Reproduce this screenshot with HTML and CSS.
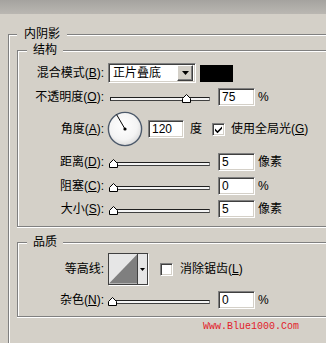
FILE: index.html
```html
<!DOCTYPE html>
<html lang="zh">
<head>
<meta charset="utf-8">
<link rel="stylesheet" href="styles.css">
</head>
<body>
<div class="titlebar"></div>
<fieldset class="group outer">
  <legend>内阴影</legend>
  <fieldset class="group sub struct">
    <legend>结构</legend>
    <div class="row">
      <span class="lbl">混合模式(<u>B</u>):</span>
      <div class="select">
        <span class="sel-text">正片叠底</span>
        <span class="sel-btn"><svg width="7" height="4" viewBox="0 0 7 4"><path d="M0 0H7L3.5 4Z" fill="#000"/></svg></span>
      </div>
      <div class="swatch"></div>
    </div>
    <div class="row">
      <span class="lbl">不透明度(<u>O</u>):</span>
      <div class="slider"><div class="track"></div><svg class="thumb" style="left:72px" width="9" height="9" viewBox="0 0 9 9"><path d="M4.5 0.5L8.5 4.5V8.5H0.5V4.5Z" fill="#fff" stroke="#000"/></svg></div>
      <div class="field">75</div>
      <span class="unit">%</span>
    </div>
    <div class="row">
      <span class="lbl">角度(<u>A</u>):</span>
      <svg class="dial" width="36" height="36" viewBox="0 0 36 36">
        <defs><radialGradient id="dg" cx="0.45" cy="0.4" r="0.6"><stop offset="0" stop-color="#ffffff"/><stop offset="0.7" stop-color="#f4f4f4"/><stop offset="1" stop-color="#dcdcdc"/></radialGradient></defs>
        <circle cx="18" cy="18" r="16.6" fill="url(#dg)" stroke="#4d5a6b" stroke-width="1.4"/>
        <line x1="18" y1="18" x2="9.6" y2="3.6" stroke="#000" stroke-width="1"/>
        <circle cx="18" cy="18" r="1.6" fill="#000"/>
      </svg>
      <div class="field f-angle">120</div>
      <span class="unit u-deg">度</span>
      <span class="check"><svg width="9" height="9" viewBox="0 0 9 9"><path d="M1 3.5L3.5 6L8 1.5V3.8L3.5 8.3L1 5.8Z" fill="#000"/></svg></span>
      <span class="ck-text">使用全局光(<u>G</u>)</span>
    </div>
    <div class="row gap6">
      <span class="lbl">距离(<u>D</u>):</span>
      <div class="slider"><div class="track"></div><svg class="thumb" style="left:-1px" width="9" height="9" viewBox="0 0 9 9"><path d="M4.5 0.5L8.5 4.5V8.5H0.5V4.5Z" fill="#fff" stroke="#000"/></svg></div>
      <div class="field">5</div>
      <span class="unit">像素</span>
    </div>
    <div class="row gap6">
      <span class="lbl">阻塞(<u>C</u>):</span>
      <div class="slider"><div class="track"></div><svg class="thumb" style="left:-1px" width="9" height="9" viewBox="0 0 9 9"><path d="M4.5 0.5L8.5 4.5V8.5H0.5V4.5Z" fill="#fff" stroke="#000"/></svg></div>
      <div class="field">0</div>
      <span class="unit">%</span>
    </div>
    <div class="row">
      <span class="lbl">大小(<u>S</u>):</span>
      <div class="slider"><div class="track"></div><svg class="thumb" style="left:-1px" width="9" height="9" viewBox="0 0 9 9"><path d="M4.5 0.5L8.5 4.5V8.5H0.5V4.5Z" fill="#fff" stroke="#000"/></svg></div>
      <div class="field">5</div>
      <span class="unit">像素</span>
    </div>
  </fieldset>
  <fieldset class="group sub quality">
    <legend>品质</legend>
    <div class="row">
      <span class="lbl">等高线:</span>
      <div class="contour">
        <svg class="preview" width="29" height="30" viewBox="0 0 29 30"><rect width="29" height="30" fill="#e6e6e6"/><path d="M0 30L29 0V30Z" fill="#7f7f7f"/></svg>
        <span class="ct-btn"><svg width="5" height="3" viewBox="0 0 5 3"><path d="M0 0H5L2.5 3Z" fill="#000"/></svg></span>
      </div>
      <span class="check check-aa"></span>
      <span class="ck-text aa-text">消除锯齿(<u>L</u>)</span>
    </div>
    <div class="row gap6">
      <span class="lbl">杂色(<u>N</u>):</span>
      <div class="slider"><div class="track"></div><svg class="thumb" style="left:-2px" width="9" height="9" viewBox="0 0 9 9"><path d="M4.5 0.5L8.5 4.5V8.5H0.5V4.5Z" fill="#fff" stroke="#000"/></svg></div>
      <div class="field">0</div>
      <span class="unit">%</span>
    </div>
  </fieldset>
  <div class="watermark">Www.Blue1000.Com</div>
</fieldset>
</body>
</html>
```

FILE: styles.css
```css
* { box-sizing: border-box; }
html, body { margin: 0; overflow: hidden; }
body {
  width: 326px;
  height: 343px;
  background: #d4d0c8;
  color: #000;
  font: 12px/15px "Liberation Sans", "Noto Sans CJK SC", sans-serif;
}
u { text-decoration: underline; text-underline-offset: 1px; }

.titlebar {
  height: 14px;
  background: linear-gradient(#a5a39f, #bab7b2);
}

.group {
  margin: 0;
  padding: 0;
  min-inline-size: 0;
  border: 1px solid #808080;
  border-right: 0;
  box-shadow: inset 1px 1px 0 #fff, 0 1px 0 #fff;
}
.group > legend {
  padding: 0 6px;
  line-height: 15px;
  background: #d4d0c8;
}
.outer {
  margin: 13px 0 0 8px;
  width: 318px;
  height: 316px;
  border-bottom: 0;
}
.outer > legend { margin-left: 8px; padding: 0 7px; }
.sub { margin-left: 8px; width: 309px; }
.sub > legend { margin-left: 9px; }
.struct { margin-top: 1px; padding: 5px 0 8px; }
.quality { margin-top: 8px; padding: 3px 0 7px; }

.row { display: flex; align-items: center; }
.row + .row { margin-top: 5px; }
.row.gap6 { margin-top: 6px; }
.lbl { flex: none; width: 86px; text-align: right; white-space: nowrap; }

.select {
  margin-left: 4px;
  width: 88px;
  height: 20px;
  display: flex;
  align-items: center;
  background: #fff;
  border: 1px solid;
  border-color: #808080 #fff #fff #808080;
  box-shadow: inset 1px 1px 0 #404040, inset -1px -1px 0 #d4d0c8;
  padding: 2px;
}
.sel-text { flex: 1; padding-left: 2px; }
.sel-btn {
  width: 16px;
  height: 16px;
  display: flex;
  align-items: center;
  justify-content: center;
  background: #d4d0c8;
  border: 1px solid;
  border-color: #fff #404040 #404040 #fff;
  box-shadow: inset -1px -1px 0 #808080;
}
.swatch {
  margin-left: 4px;
  width: 33px;
  height: 17px;
  background: #000;
}

.slider {
  position: relative;
  margin-left: 6px;
  width: 100px;
  height: 18px;
}
.track {
  margin-top: 9px;
  height: 4px;
  background: #f4f4f4;
  border: 1px solid;
  border-color: #202020 #808080 #404040 #202020;
}
.thumb { position: absolute; top: 6px; }

.field {
  margin-left: 8px;
  width: 37px;
  height: 18px;
  background: #fff;
  border: 1px solid;
  border-color: #808080 #fff #fff #808080;
  box-shadow: inset 1px 1px 0 #404040, inset -1px -1px 0 #d4d0c8;
  padding: 1px 3px;
  line-height: 15px;
}
.unit { margin-left: 3px; }

.dial { margin-left: 3px; display: block; }
.f-angle { margin-left: 5px; width: 36px; }
.u-deg { margin-left: 6px; }
.check {
  margin-left: 10px;
  width: 13px;
  height: 13px;
  display: flex;
  align-items: center;
  justify-content: center;
  background: #fff;
  border: 1px solid;
  border-color: #808080 #fff #fff #808080;
  box-shadow: inset 1px 1px 0 #404040, inset -1px -1px 0 #d4d0c8;
}
.ck-text { margin-left: 6px; white-space: nowrap; }

.contour {
  margin-left: 4px;
  width: 40px;
  height: 32px;
  display: flex;
  border: 1px solid #404040;
  box-shadow: 1px 1px 0 #fff;
  background: #e6e6e6;
}
.preview { display: block; border-right: 1px solid #404040; }
.ct-btn {
  flex: 1;
  display: flex;
  align-items: center;
  justify-content: center;
}
.check-aa { margin-left: 12px; }
.aa-text { margin-left: 7px; }

.watermark {
  margin: 4px 0 0 194px;
  font: 10px/12px "Liberation Mono", monospace;
  color: #e2202a;
}
```
